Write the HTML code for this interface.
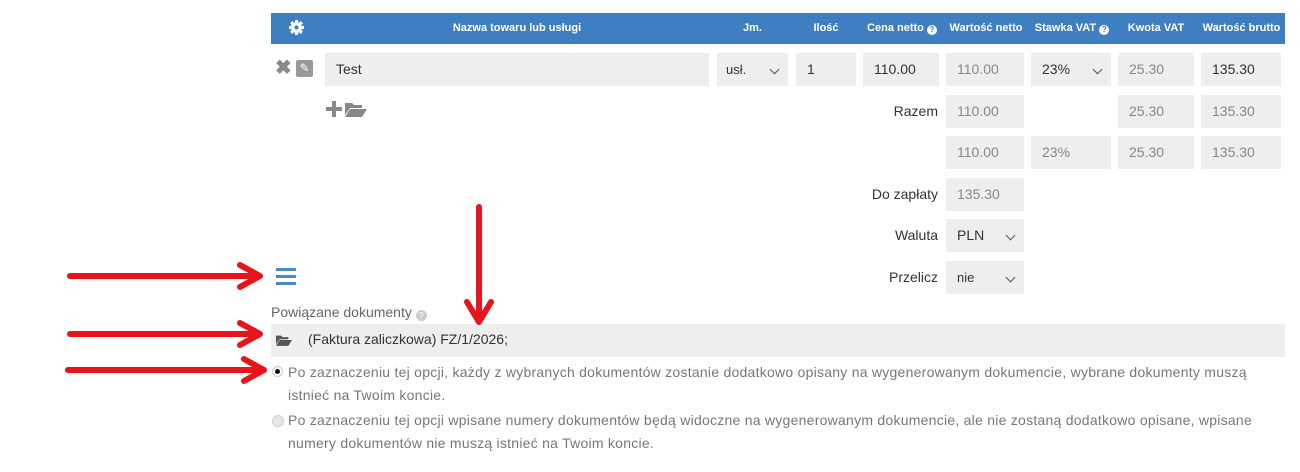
<!DOCTYPE html>
<html><head><meta charset="utf-8"><style>
body{margin:0;width:1300px;height:472px;background:#fff;font-family:"Liberation Sans",sans-serif;position:relative;overflow:hidden}
.a{position:absolute}
.hdr{left:271px;top:13px;width:1014px;height:31px;background:#3e7fc1}
.h{position:absolute;top:13px;height:31px;line-height:31px;color:#fff;font-size:11px;font-weight:bold;text-align:center}
.q{display:inline-block;width:10px;height:10px;border-radius:50%;background:#fff;color:#3e7fc1;font-size:8px;line-height:10px;text-align:center;vertical-align:-1px}
.b{position:absolute;background:#eee;height:33px;line-height:33px;font-size:14px;color:#888;padding-left:11px;box-sizing:border-box}
.d{color:#333}
.lbl{position:absolute;font-size:14px;color:#333;text-align:right;width:120px;line-height:33px;height:33px}
.chev{position:absolute;right:10px;top:13px;width:6px;height:6px;border-right:1.5px solid #555;border-bottom:1.5px solid #555;transform:rotate(45deg)}
.txt{position:absolute;left:288px;font-size:14px;color:#777;line-height:23px;width:975px;letter-spacing:0.25px}
</style></head><body>
<div class="a hdr"></div>
<svg class="a" style="left:288px;top:19px" width="17" height="17" viewBox="0 0 16 16"><circle cx="8" cy="8" r="5" fill="#fff"/><g stroke="#fff" stroke-width="3"><line x1="8" y1="1" x2="8" y2="15"/><line x1="1" y1="8" x2="15" y2="8"/><line x1="3" y1="3" x2="13" y2="13"/><line x1="13" y1="3" x2="3" y2="13"/></g><circle cx="8" cy="8" r="2" fill="#3e7fc1"/></svg>
<div class="h" style="left:400px;width:234px">Nazwa towaru lub usługi</div>
<div class="h" style="left:717px;width:71px">Jm.</div>
<div class="h" style="left:796px;width:60px">Ilość</div>
<div class="h" style="left:860px;width:84px">Cena netto <span class="q">?</span></div>
<div class="h" style="left:944px;width:84px">Wartość netto</div>
<div class="h" style="left:1028px;width:88px">Stawka VAT <span class="q">?</span></div>
<div class="h" style="left:1116px;width:80px">Kwota VAT</div>
<div class="h" style="left:1199px;width:85px">Wartość brutto</div>

<div class="a" style="left:275px;top:58px;font-size:20px;color:#888;font-weight:bold;line-height:20px">✖</div>
<div class="a" style="left:296px;top:60px;width:17px;height:17px;background:#999;border-radius:2px;color:#fff;font-size:12px;text-align:center;line-height:17px">✎</div>
<div class="b d" style="left:325px;top:53px;width:384px">Test</div>
<div class="b d" style="left:717px;top:53px;width:71px;font-size:13px;padding-left:9px">usł.<span class="chev"></span></div>
<div class="b d" style="left:796px;top:53px;width:60px">1</div>
<div class="b d" style="left:863px;top:53px;width:76px">110.00</div>
<div class="b" style="left:946px;top:53px;width:78px">110.00</div>
<div class="b d" style="left:1031px;top:53px;width:80px">23%<span class="chev"></span></div>
<div class="b" style="left:1118px;top:53px;width:76px">25.30</div>
<div class="b d" style="left:1201px;top:53px;width:80px">135.30</div>

<svg class="a" style="left:325px;top:100px" width="18" height="18" viewBox="0 0 18 18"><path d="M7 1h4v6h6v4h-6v6H7v-6H1V7h6z" fill="#888"/></svg>
<svg class="a" style="left:345px;top:101px" width="22" height="16" viewBox="0 0 22 16"><path d="M0 2h7l2 2h8v3H5L0 14z" fill="#888"/><path d="M5 8h17l-5 8H0z" fill="#888"/></svg>

<div class="lbl" style="left:818px;top:95px">Razem</div>
<div class="b" style="left:946px;top:95px;width:78px">110.00</div>
<div class="b" style="left:1118px;top:95px;width:76px">25.30</div>
<div class="b" style="left:1201px;top:95px;width:80px">135.30</div>

<div class="b" style="left:946px;top:136px;width:78px">110.00</div>
<div class="b" style="left:1031px;top:136px;width:80px">23%</div>
<div class="b" style="left:1118px;top:136px;width:76px">25.30</div>
<div class="b" style="left:1201px;top:136px;width:80px">135.30</div>

<div class="lbl" style="left:818px;top:178px">Do zapłaty</div>
<div class="b" style="left:946px;top:178px;width:78px">135.30</div>
<div class="lbl" style="left:818px;top:219px">Waluta</div>
<div class="b d" style="left:946px;top:219px;width:78px">PLN<span class="chev"></span></div>
<div class="lbl" style="left:818px;top:261px">Przelicz</div>
<div class="b d" style="left:946px;top:261px;width:78px;font-size:13px">nie<span class="chev"></span></div>

<div class="a" style="left:276px;top:268px;width:20px;height:3px;background:#4a8acb;box-shadow:0 7px 0 #4a8acb,0 14px 0 #4a8acb"></div>

<div class="a" style="left:271px;top:304px;font-size:14px;color:#666">Powiązane dokumenty <span class="q" style="background:#ccc;color:#fff;width:11px;height:11px;line-height:11px">?</span></div>
<div class="a" style="left:271px;top:324px;width:1014px;height:33px;background:#eee"></div>
<svg class="a" style="left:276px;top:334px" width="16" height="12" viewBox="0 0 22 16"><path d="M0 2h7l2 2h8v3H5L0 14z" fill="#555"/><path d="M5 8h17l-5 8H0z" fill="#555"/></svg>
<div class="a" style="left:308px;top:331px;font-size:14px;color:#333">(Faktura zaliczkowa) FZ/1/2026;</div>

<div class="a" style="left:272px;top:366px;width:9px;height:9px;border-radius:50%;background:#fff;border:1px solid #ccc"><div style="margin:2px;width:5px;height:5px;border-radius:50%;background:#111"></div></div>
<div class="txt" style="top:361px">Po zaznaczeniu tej opcji, każdy z wybranych dokumentów zostanie dodatkowo opisany na wygenerowanym dokumencie, wybrane dokumenty muszą istnieć na Twoim koncie.</div>
<div class="a" style="left:272px;top:415px;width:10px;height:10px;border-radius:50%;background:#e6e6e6;border:1px solid #d0d0d0"></div>
<div class="txt" style="top:409px">Po zaznaczeniu tej opcji wpisane numery dokumentów będą widoczne na wygenerowanym dokumencie, ale nie zostaną dodatkowo opisane, wpisane numery dokumentów nie muszą istnieć na Twoim koncie.</div>

<svg class="a" style="left:0;top:0" width="1300" height="472">
<g stroke="#e8141b" stroke-width="6" stroke-linecap="round" fill="none" stroke-linejoin="round">
<line x1="70" y1="276" x2="258" y2="276"/><polyline points="240,265 260,276 240,287"/>
<line x1="70" y1="334" x2="258" y2="334"/><polyline points="240,323 260,334 240,345"/>
<line x1="68" y1="370" x2="262" y2="370"/><polyline points="244,359 264,370 244,381"/>
<line x1="479" y1="207" x2="479" y2="320"/><polyline points="467,302 479,322 491,302"/>
</g></svg>
</body></html>
